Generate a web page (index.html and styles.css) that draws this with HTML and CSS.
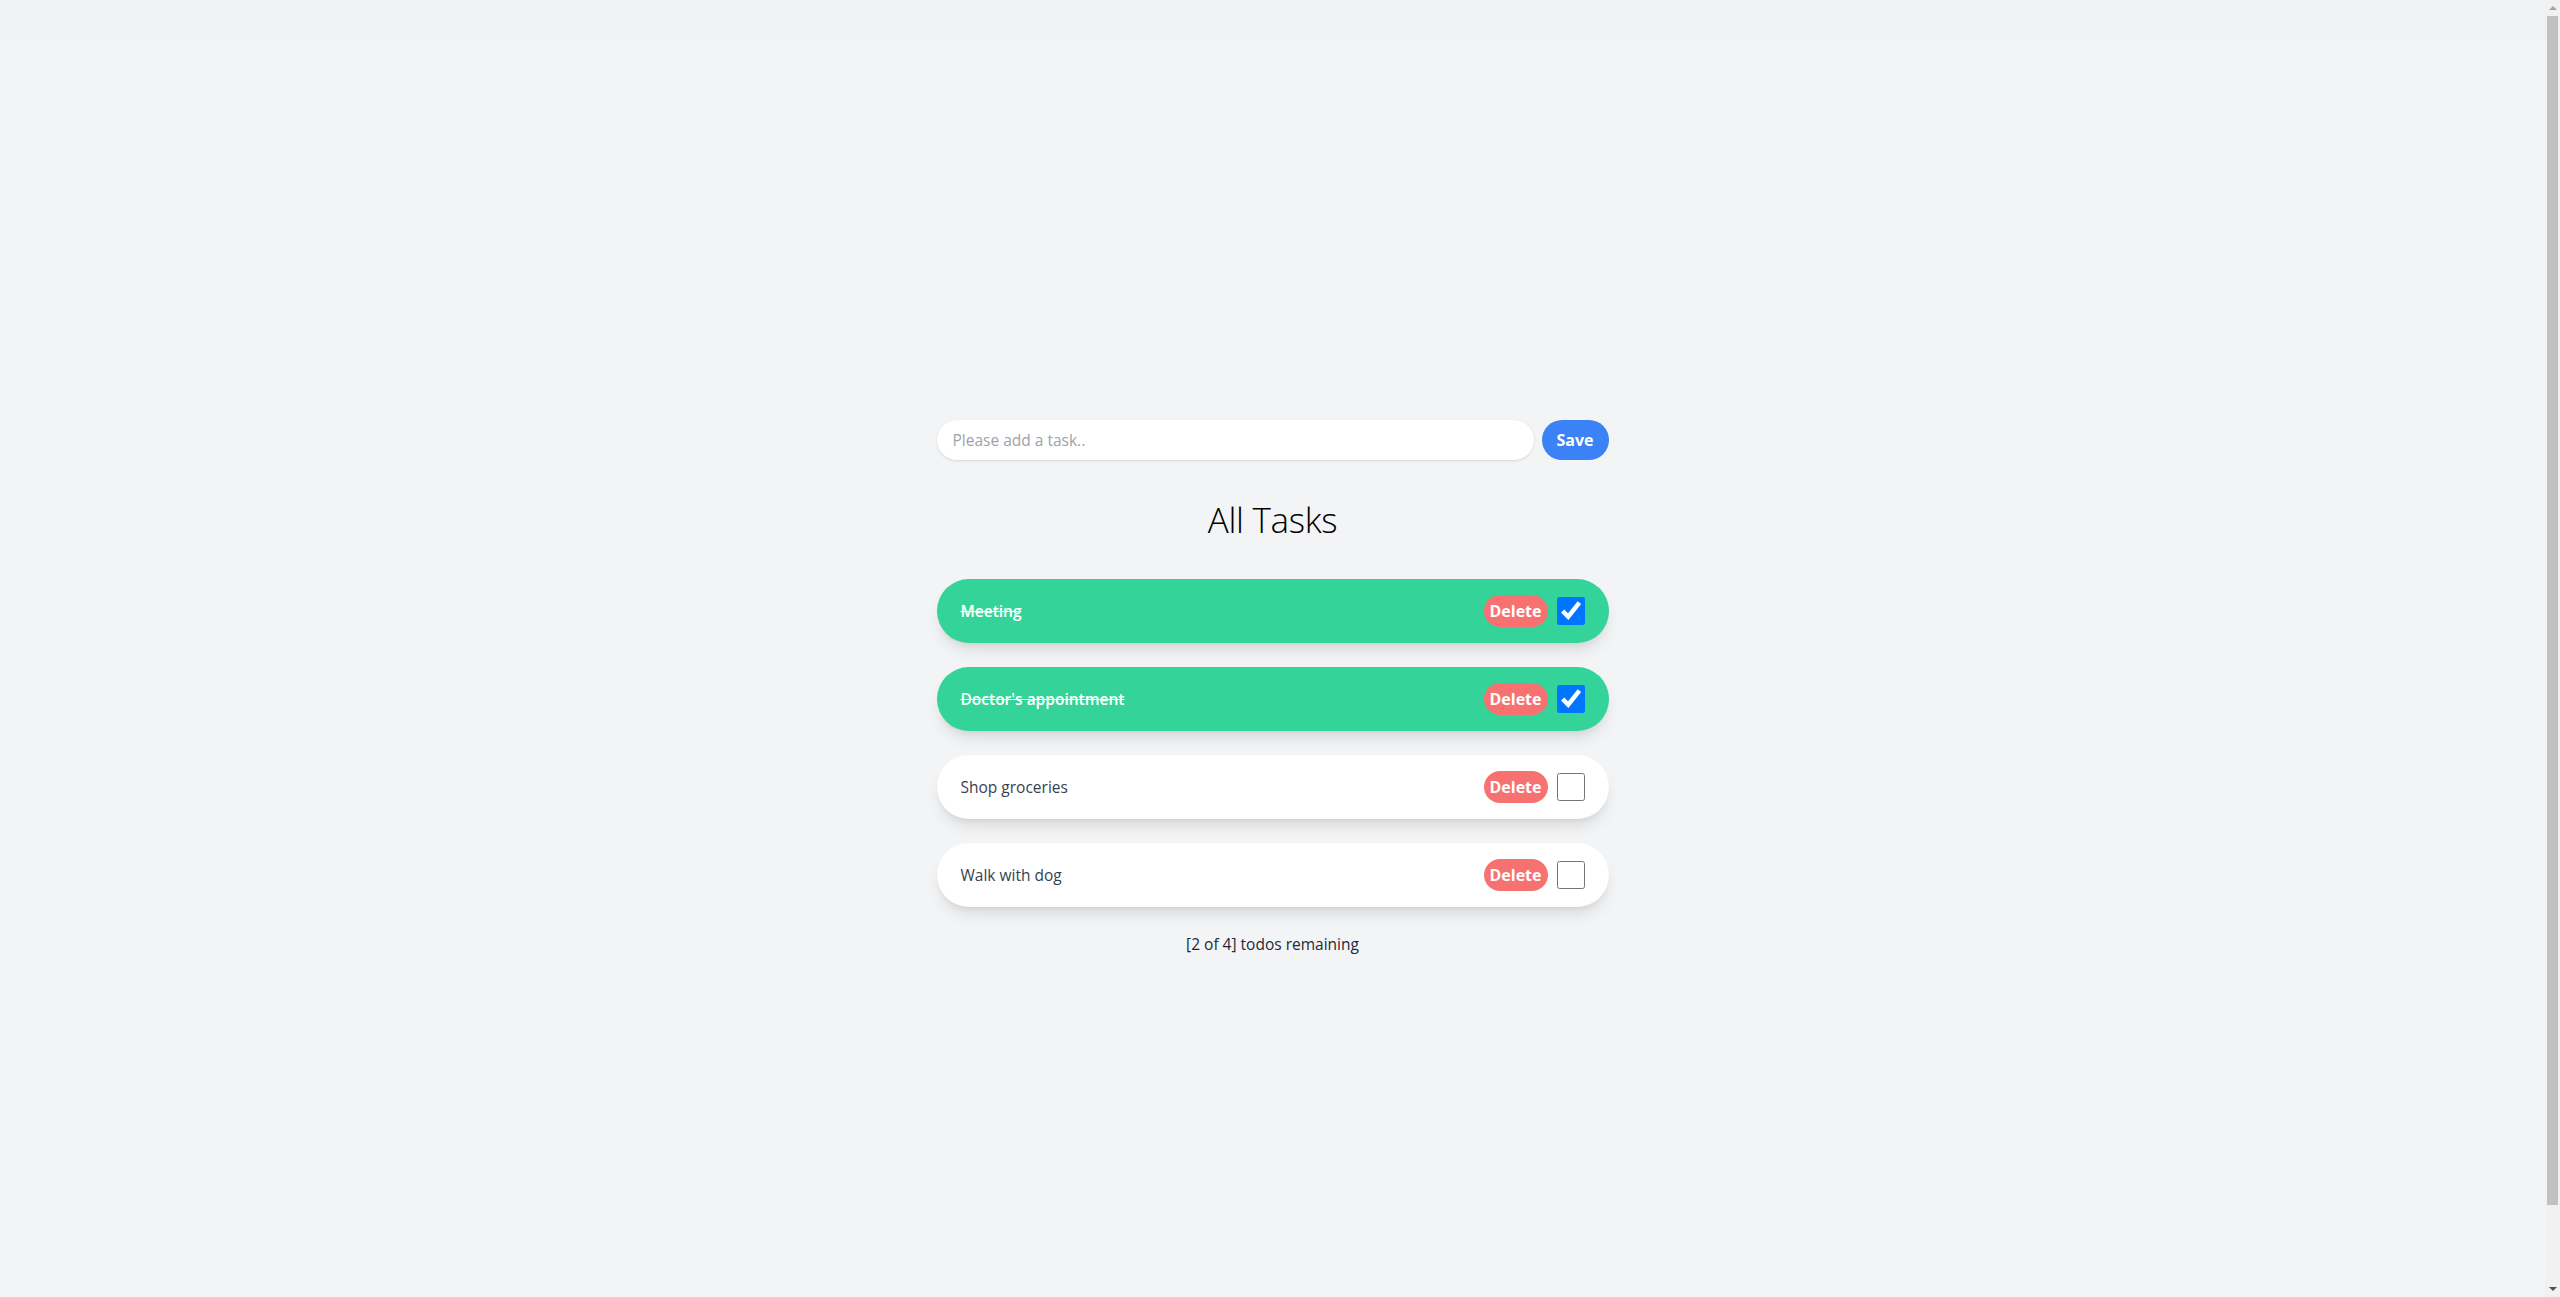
FILE: index.html
```html
<!DOCTYPE html>
<html lang="en">
<head>
<meta charset="utf-8">
<title>Todos</title>
<link rel="stylesheet" href="styles.css">
</head>
<body>
<div class="topbar"></div>
<main class="page">
  <div class="todo">
    <form class="add-form">
      <input class="add-input" type="text" placeholder="Please add a task..">
      <button class="save-btn" type="button">Save</button>
    </form>
    <h1 class="title">All Tasks</h1>
    <ul class="list">
      <li class="item done">
        <span class="item-text">Meeting</span>
        <div class="item-actions">
          <button class="delete-btn" type="button">Delete</button>
          <input class="check" type="checkbox" checked>
        </div>
      </li>
      <li class="item done">
        <span class="item-text">Doctor's appointment</span>
        <div class="item-actions">
          <button class="delete-btn" type="button">Delete</button>
          <input class="check" type="checkbox" checked>
        </div>
      </li>
      <li class="item">
        <span class="item-text">Shop groceries</span>
        <div class="item-actions">
          <button class="delete-btn" type="button">Delete</button>
          <input class="check" type="checkbox">
        </div>
      </li>
      <li class="item">
        <span class="item-text">Walk with dog</span>
        <div class="item-actions">
          <button class="delete-btn" type="button">Delete</button>
          <input class="check" type="checkbox">
        </div>
      </li>
    </ul>
    <p class="remaining">[2 of 4] todos remaining</p>
  </div>
</main>
<div class="scrollbar" aria-hidden="true">
  <span class="sb-arrow sb-up"></span>
  <span class="sb-thumb"></span>
  <span class="sb-rest"></span>
  <span class="sb-arrow sb-down"></span>
</div>
</body>
</html>
```
FILE: styles.css
```css
html, body {
  margin: 0;
  padding: 0;
}
body {
  background: #f3f4f6;
  font-family: "Open Sans", "Noto Sans", sans-serif;
  color: #1f2937;
  padding-right: 15px;
  overflow: hidden;
}
.topbar {
  height: 40px;
  background: #f1f2f4;
}
.page {
  padding: 380px 0 0;
}
.todo {
  width: 672px;
  margin: 0 auto;
}
.add-form {
  display: flex;
  gap: 8px;
  margin: 0;
}
.add-input {
  flex: 1;
  height: 40px;
  box-sizing: border-box;
  border: none;
  border-radius: 9999px;
  padding: 0 16px;
  font-family: inherit;
  font-size: 15.5px;
  color: #374151;
  background: #fff;
  box-shadow: 0 1px 3px rgba(0,0,0,0.1), 0 1px 2px -1px rgba(0,0,0,0.1);
  outline: none;
}
.add-input::placeholder {
  color: #9ca3af;
}
.save-btn {
  width: 67px;
  height: 40px;
  border: none;
  border-radius: 9999px;
  background: #3b82f6;
  color: #fff;
  font-family: inherit;
  font-weight: 700;
  font-size: 16px;
  padding: 0;
}
.title {
  margin: 40px 0 39px;
  text-align: center;
  font-size: 35px;
  line-height: 40px;
  font-weight: 300;
  letter-spacing: -0.3px;
  color: #000;
}
.list {
  list-style: none;
  margin: 0;
  padding: 0;
  display: flex;
  flex-direction: column;
  gap: 24px;
}
.item {
  height: 64px;
  box-sizing: border-box;
  padding: 0 24px;
  display: flex;
  align-items: center;
  justify-content: space-between;
  background: #fff;
  border-radius: 9999px;
  box-shadow: 0 10px 15px -3px rgba(0,0,0,0.1), 0 4px 6px -4px rgba(0,0,0,0.1);
}
.item-text {
  font-size: 15.5px;
  color: #374151;
}
.item.done {
  background: #34d399;
}
.item.done .item-text {
  color: #fff;
  font-weight: 600;
  text-decoration: line-through;
}
.item-actions {
  display: flex;
  align-items: center;
  gap: 9px;
}
.delete-btn {
  width: 64px;
  height: 32px;
  border: none;
  border-radius: 9999px;
  background: #f87171;
  color: #fff;
  font-family: inherit;
  font-weight: 700;
  font-size: 16px;
  padding: 0;
}
.check {
  width: 28px;
  height: 28px;
  margin: 0;
}
.remaining {
  margin: 25px 0 0;
  text-align: center;
  font-size: 15.5px;
  line-height: 24px;
  color: #1f2937;
}
.scrollbar {
  position: fixed;
  top: 0;
  right: 0;
  width: 15px;
  height: 100vh;
  background: #f1f1f1;
  display: flex;
  flex-direction: column;
  align-items: center;
}
.sb-arrow {
  height: 16px;
  width: 15px;
  display: flex;
  justify-content: center;
  align-items: center;
}
.sb-up::before {
  content: "";
  border-left: 4px solid transparent;
  border-right: 4px solid transparent;
  border-bottom: 4px solid #a3a3a3;
}
.sb-down::before {
  content: "";
  border-left: 4px solid transparent;
  border-right: 4px solid transparent;
  border-top: 4px solid #505050;
}
.sb-thumb {
  width: 11px;
  height: 1189px;
  background: #c1c1c1;
}
.sb-rest {
  flex: 1;
}
```
